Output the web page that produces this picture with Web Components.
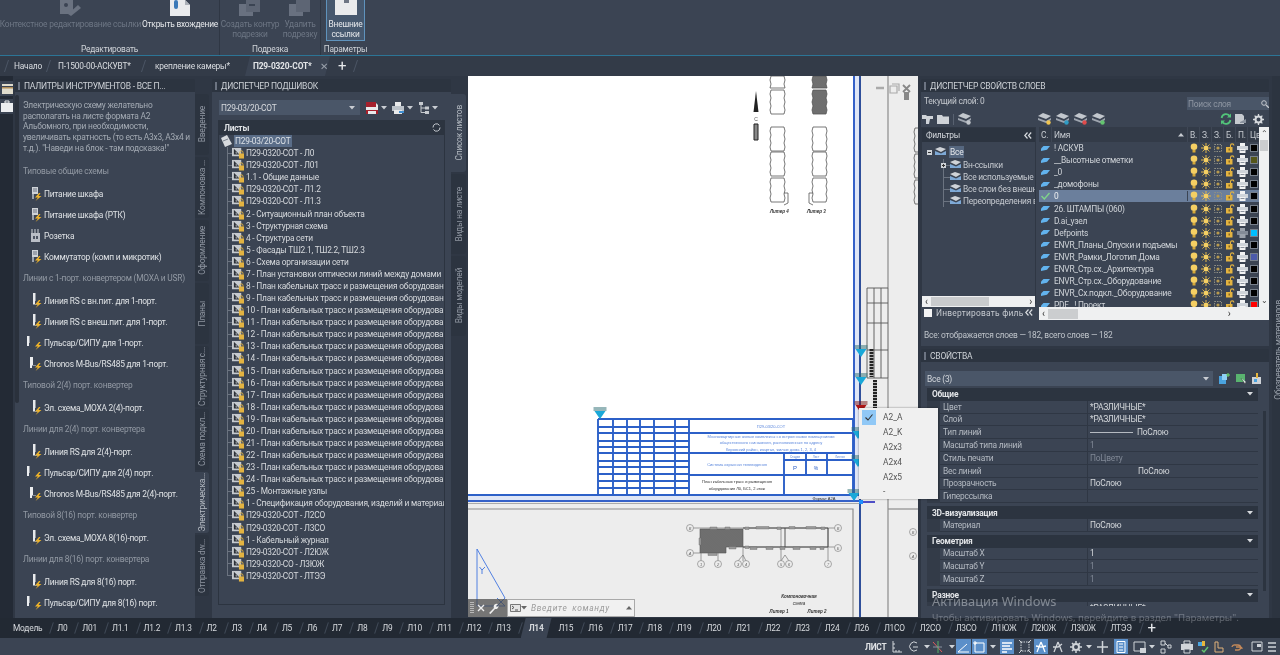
<!DOCTYPE html>
<html lang="ru">
<head>
<meta charset="utf-8">
<title>П29-0320-СОТ</title>
<style>
  html, body { margin: 0; height: 100%; background: #2f3744; }
  body {
    width: 1280px; height: 655px; overflow: hidden;
    display: flex; flex-direction: column;
    background: #2f3744; color: #d3d7dc;
    font: 8.400px Roboto, "Noto Sans", sans-serif;
    letter-spacing: -.22px;
    position: relative;
    filter: blur(.3px);
  }
</style>
</head>
<body>
<cad-ribbon></cad-ribbon>
<doc-tabs></doc-tabs>
<cad-main>
  <tool-strip></tool-strip>
  <dock-panel label="ПАЛИТРЫ ИНСТРУМЕНТОВ - ВСЕ П..." style="width:180px"><tool-palette></tool-palette></dock-panel>
  <side-tabs active="6" tabs="Введение|61,Компоновка ...|61,Оформление|61,Планы|61,Структурная с...|61,Схема подкл...|61,Электрическа...|61,Отправка dw...|61" style="width:14px;margin-right:3px"></side-tabs>
  <dock-panel label="ДИСПЕТЧЕР ПОДШИВОК" style="width:239px"><sheet-set></sheet-set></dock-panel>
  <side-tabs active="0" tabs="Список листов|78,Виды на листе|80,Виды моделей|80" style="width:15px;margin-right:2px"></side-tabs>
  <cad-canvas></cad-canvas>
  <right-dock>
    <dock-panel label="ДИСПЕТЧЕР СВОЙСТВ СЛОЕВ" style="height:270px"><layer-manager></layer-manager></dock-panel>
    <dock-panel label="СВОЙСТВА" style="flex:1"><props-panel></props-panel></dock-panel>
  </right-dock>
  <material-strip></material-strip>
</cad-main>
<layout-tabs></layout-tabs>
<status-bar></status-bar>
<layer-popup></layer-popup>
<win-activation></win-activation>

<script>
// small icons shared by the panels
const slash = (h = 12, c = '#4c5665') => `<svg width="5" height="${h}" viewBox="0 0 5 12"><path d="M4.5 0 .5 12" stroke="${c}" fill="none"/></svg>`;

const sheetIcon = `<svg width="12" height="12" viewBox="0 0 13 13"><path d="M0 1h10v9H0z" fill="#c6cacf"/><path d="M2 2v6h6z" fill="#2b2f36"/><path d="M4 5v2h2z" fill="#c6cacf"/><path d="M8.5 7V5.800a1.700 1.700 0 0 1 3.400 0V7" fill="none" stroke="#e3b341"/><path d="M7.500 7h5.500v5.500H7.500z" fill="#e3b341"/></svg>`;

const boltIcon = kind => {
  const blocks = {
    a: '<path d="M8 1h6v7H8z" fill="#cfd3d8"/><path d="M9 3h4M9 5h4" stroke="#6b7380"/><path d="M8 8h2v5H8z" fill="#9aa2ad"/>',
    b: '<path d="M9 0h2.500v8H11v3H9z" fill="#e8eaec"/><path d="M9 11h5v1H9z" fill="#8b93a0"/>',
    c: '<path d="M3 1h2.500v7H5v3H3z" fill="#eceef0"/>',
    d: '<path d="M6 1h3v8H8v3H6z" fill="#eceef0"/><path d="M8 9h4v1H8z" fill="#8b93a0"/>'
  };
  return `<svg width="19" height="16" viewBox="0 0 19 16">${blocks[kind]}<path d="M15 7 11 11.500h3L11.500 15l6-5h-3l2-3z" fill="#f0b429"/></svg>`;
};
const plugIcon = `<svg width="19" height="16" viewBox="0 0 19 16"><path d="M8 1v4M11 1v4M14 1v4" stroke="#cfd3d8"/><path d="M7 5h9v9H7z" fill="#b9bec6"/><path d="M9 8h2v3H9zM12 8h2v3h-2z" fill="#4c5462"/></svg>`;

const layerIcons = {
  bulb: `<svg width="10" height="10" viewBox="0 0 10 10"><circle cx="5" cy="3.800" r="3.300" fill="#f5cf63"/><path d="M3.500 7h3v2.500h-3z" fill="#d6a93a"/></svg>`,
  sun: `<svg width="10" height="10" viewBox="0 0 10 10"><circle cx="5" cy="5" r="2.500" fill="#f5cf63"/><path d="M5 0v2M5 8v2M0 5h2M8 5h2M1.500 1.500l1.400 1.400M7.100 7.100l1.400 1.400M1.500 8.500l1.400-1.400M7.100 2.900l1.400-1.400" stroke="#e5b84a"/></svg>`,
  vp: `<svg width="10" height="10" viewBox="0 0 10 10"><path d="M1.500 1.500h7v7h-7z" fill="none" stroke="#8f8f84" stroke-dasharray="1.500 1"/><circle cx="5" cy="5" r="1.600" fill="#b89a4e"/></svg>`,
  lock: `<svg width="10" height="10" viewBox="0 0 10 10"><path d="M5.500 4V2.600a1.700 1.700 0 0 1 3.400 0" fill="none" stroke="#e3b341" stroke-width="1.100"/><path d="M1 4h6.500v5.500H1z" fill="#e3b341"/><path d="M3.500 5.500h1.500v2H3.500z" fill="#8a6a1f"/></svg>`,
  print: `<svg width="11" height="10" viewBox="0 0 11 10"><path d="M3 0h5v3H3z" fill="#f2f3f4"/><path d="M0 3h11v4H0z" fill="#cfd4da"/><path d="M2.500 6h6v4h-6z" fill="#f2f3f4"/><path d="M3.500 7.500h4" stroke="#8a919c"/></svg>`,
  printOff: `<svg width="11" height="10" viewBox="0 0 11 10"><path d="M3 0h5v3H3z" fill="#9aa1ab"/><path d="M0 3h11v4H0z" fill="#828a96"/><path d="M2.500 6h6v4h-6z" fill="#9aa1ab"/></svg>`
};
const layerSwatch = `<svg width="9" height="7" viewBox="0 0 9 7"><path d="M0 3.500 2.500 1H9L6 4.800 0 6z" fill="#62b3ee"/></svg>`;
const arrowDown = (c = '#c8ccd2') => `<svg width="6" height="4" viewBox="0 0 6 4"><path d="M0 0h6L3 3.500z" fill="${c}"/></svg>`;
const chevrons = `<svg width="8" height="7" viewBox="0 0 8 7"><path d="M3.500.5.800 3.500l2.700 3M7.200.5 4.500 3.500l2.700 3" fill="none" stroke="#d7dade" stroke-width="1.200"/></svg>`;

class CadElement extends HTMLElement {
  connectedCallback() {
    if (this.shadowRoot) return;
    this.attachShadow({ mode: 'open' });
    this.shadowRoot.innerHTML = this.render();
  }
}

class CadRibbon extends CadElement {
  render() {
    return `<style>
      :host { display: flex; height: 56px; flex: none; background: #3b4453; border-bottom: 1px solid #2c7596; box-sizing: border-box; }
      .group { display: flex; flex-direction: column; height: 55px; border-right: 1px solid #2f3744; box-sizing: border-box; }
      .btns { display: flex; height: 44px; }
      .btn { display: flex; flex-direction: column; align-items: center; text-align: center; line-height: 10px; white-space: nowrap; }
      .btn svg { height: 19px; flex: none; display: block; }
      .off { color: #6d7684; }
      .on { color: #e6e8eb; }
      .sel { background: #46586e; border: 1px solid #5f93bd; border-top: 0; height: 41px; box-sizing: border-box; margin-left: 5px; width: 39px; }
      .cap { text-align: center; line-height: 11px; color: #d0d4d9; }
    </style>
    <div class="group" style="width:220px">
      <div class="btns">
        <div class="btn off" style="width:141px"><svg width="22" viewBox="0 0 22 19"><path d="M0 0h13v14H0z" fill="#6a7280"/><circle cx="6" cy="5" r="2" fill="#3b4453"/><path d="M8 14 18 5l3 3-10 8z" fill="#6a7280"/></svg>Контекстное редактирование ссылки</div>
        <div class="btn on" style="width:79px"><svg width="24" viewBox="0 0 24 19"><path d="M2 0h15l5 5v11H2z" fill="#e9ebed"/><path d="M17 0v5h5" fill="#aab0b8"/><rect x="6" y="0" width="4" height="9" rx="2" fill="#3a79b8"/></svg>Открыть вхождение</div>
      </div>
      <div class="cap">Редактировать</div>
    </div>
    <div class="group" style="width:101px">
      <div class="btns">
        <div class="btn off" style="width:60px"><svg width="22" viewBox="0 0 22 19"><path d="M0 4h14v12H0z" fill="#697180"/><path d="M7 0h14v12H7z" fill="#5d6574"/><path d="M10 4h6v2h-6z" fill="#3b4453"/></svg>Создать контур<br>подрезки</div>
        <div class="btn off" style="width:40px"><svg width="22" viewBox="0 0 22 19"><path d="M0 4h14v12H0z" fill="#697180"/><path d="M7 0h14v12H7z" fill="#5d6574"/></svg>Удалить<br>подрезку</div>
      </div>
      <div class="cap">Подрезка</div>
    </div>
    <div class="group" style="width:49px;border-right:0">
      <div class="btns">
        <div class="btn on sel"><svg width="22" viewBox="0 0 22 19"><path d="M0 0h22v15H0z" fill="#e9ebed"/><path d="M9 0h5v3H9z" fill="#6d7684"/></svg>Внешние<br>ссылки</div>
      </div>
      <div class="cap">Параметры</div>
    </div>`;
  }
}

class DocTabs extends CadElement {
  render() {
    return `<style>
      :host { display: flex; align-items: center; height: 20px; flex: none; background: #333b48; color: #d9dce0; }
      .tab { display: flex; align-items: center; white-space: nowrap; }
      .active { background: #3b4453; height: 20px; width: 85px; margin: 0 0 0 14px; padding-left: 8px; box-sizing: border-box; font-weight: 700; color: #e3e5e8; clip-path: polygon(5px 0, 100% 0, calc(100% - 5px) 100%, 0 100%); }
      .x { margin-left: 9px; color: #9aa1ab; font-weight: 400; font-size: 10px; }
      .plus { margin-left: 8px; font-size: 15px; line-height: 12px; color: #e6e8eb; }
      .s { display: flex; margin: 0 6px; }
    </style>
    <span class="s" style="margin-left:4px;margin-right:5px">${slash()}</span>
    <span class="tab" style="width:28px">Начало</span>
    <span class="s" style="margin:0 5px 0 4px">${slash()}</span><span class="tab" style="width:74px;margin-left:2px">П-1500-00-АСКУВТ*</span>
    <span class="s" style="margin:0 9px 0 9px">${slash()}</span><span class="tab" style="width:76px">крепление камеры*</span>
    <span class="tab active">П29-0320-СОТ*<span class="x">✕</span></span>
    <span class="plus">+</span>
    <span class="s" style="margin-left:7px">${slash()}</span>`;
  }
}

class CadMain extends CadElement {
  render() {
    return `<style>:host { display: flex; height: 542px; flex: none; background: #2f3744; overflow: hidden; }</style><slot></slot>`;
  }
}

class ToolStrip extends CadElement {
  render() {
    return `<style>
      :host { display: block; width: 13px; margin-right: 2px; background: #232a35; flex: none; padding-top: 5px; box-sizing: border-box; }
      div { background: #3b4453; height: 15px; margin-bottom: 3px; overflow: hidden; }
    </style>
    <div><svg width="13" height="15" viewBox="0 0 13 15"><path d="M2 3h11v2H2zM2 6h11v7H2z" fill="#e0dccd"/><path d="M2 6h11v1.500H2z" fill="#b08d57"/></svg></div>
    <div><svg width="13" height="15" viewBox="0 0 13 15"><path d="M1 4h12v9H1z" fill="#eceef0"/><path d="M5 2h4v2H5z" fill="none" stroke="#eceef0"/></svg></div>`;
  }
}

class DockPanel extends CadElement {
  render() {
    return `<style>
      :host { display: flex; flex-direction: column; flex: none; min-height: 0; }
      .bar { display: flex; align-items: center; gap: 4px; height: 13px; margin-top: 3px; padding-left: 3px; background: #2c3440; flex: none; white-space: nowrap; font-size: 8.500px; color: #ced2d7; border-radius: 2px 2px 0 0; }
      .bar i { width: 2px; height: 8px; background: #6c7482; display: block; flex: none; }
      .body { flex: 1; background: #3b4453; min-height: 0; display: flex; flex-direction: column; overflow: hidden; }
    </style>
    <div class="bar"><i></i>${this.getAttribute('label')}</div>
    <div class="body"><slot></slot></div>`;
  }
}

class SideTabs extends CadElement {
  render() {
    const active = +this.getAttribute('active');
    const tabs = this.getAttribute('tabs').split(',').map((t, i) => {
      const [label, h] = t.split('|');
      return `<div class="tab ${i === active ? 'on' : ''}" style="height:${h}px"><span>${label}</span></div>`;
    }).join('');
    return `<style>
      :host { display: flex; flex-direction: column; gap: 2px; flex: none; padding-top: 18px; box-sizing: border-box; }
      .tab { background: #2c3440; color: #8f96a1; display: flex; align-items: center; justify-content: center; border-radius: 0 3px 3px 0; overflow: hidden; white-space: nowrap; }
      .tab.on { background: #3b4453; color: #b4bac2; }
      span { writing-mode: vertical-rl; transform: rotate(180deg); }
    </style>${tabs}`;
  }
}

class ToolPalette extends CadElement {
  render() {
    const rows = [
      ['h', 'Типовые общие схемы'],
      ['i', 'Питание шкафа', 'a'], ['i', 'Питание шкафа (РТК)', 'a'], ['p', 'Розетка'], ['i', 'Коммутатор (комп и микротик)', 'a'],
      ['h', 'Линии с 1-порт. конвертером (MOXA и USR)'],
      ['i', 'Линия RS с вн.пит. для 1-порт.', 'b'], ['i', 'Линия RS с внеш.пит. для 1-порт.', 'b'], ['i', 'Пульсар/СИПУ для 1-порт.', 'c'], ['i', 'Chronos M-Bus/RS485 для 1-порт.', 'd'],
      ['h', 'Типовой 2(4) порт. конвертер'],
      ['i', 'Эл. схема_МОХА 2(4)-порт.', 'b'],
      ['h', 'Линии для 2(4) порт. конвертера'],
      ['i', 'Линия RS для 2(4)-порт.', 'b'], ['i', 'Пульсар/СИПУ для 2(4) порт.', 'c'], ['i', 'Chronos M-Bus/RS485 для 2(4)-порт.', 'd'],
      ['h', 'Типовой 8(16) порт. конвертер'],
      ['i', 'Эл. схема_МОХА 8(16)-порт.', 'b'],
      ['h', 'Линии для 8(16) порт. конвертера'],
      ['i', 'Линия RS для 8(16) порт.', 'b'], ['i', 'Пульсар/СИПУ для 8(16) порт.', 'c']
    ];
    const html = rows.map(r => {
      if (r[0] === 'h') return `<div class="row head">${r[1]}</div>`;
      const icon = r[0] === 'p' ? plugIcon : boltIcon(r[2]);
      return `<div class="row item">${icon}<span>${r[1]}</span></div>`;
    }).join('');
    return `<style>
      :host { display: flex; height: 100%; }
      .scroll { width: 4px; height: 308px; margin-top: 3px; background: #2a313c; flex: none; border-radius: 2px; }
      .list { padding: 8px 0 0 4px; flex: 1; white-space: nowrap; }
      p { margin: 0 0 7px; line-height: 10.700px; color: #a4abb4; }
      .row { height: 21px; display: flex; align-items: center; }
      .head { color: #9299a3; }
      .item { padding-left: 1px; color: #dfe2e5; gap: 1px; }
      .head + .item { margin-top: 2px; }
    </style>
    <div class="scroll"></div>
    <div class="list">
      <p>Электрическую схему желательно<br>располагать на листе формата А2<br>Альбомного, при необходимости,<br>увеличивать кратность (то есть А3х3, А3х4 и<br>т.д.). "Наведи на блок - там подсказка!"</p>
      ${html}
    </div>`;
  }
}

class SheetSet extends CadElement {
  render() {
    const plan = 'План кабельных трасс и размещения оборудования';
    const sheets = [
      'П29-0320-СОТ - Л0', 'П29-0320-СОТ - Л01', '1.1 - Общие данные', 'П29-0320-СОТ - Л1.2', 'П29-0320-СОТ - Л1.3',
      '2 - Ситуационный план объекта', '3 - Структурная схема', '4 - Структура сети', '5 - Фасады ТШ2.1, ТШ2.2, ТШ2.3',
      '6 - Схема организации сети', '7 - План установки оптически линий между домами'
    ];
    for (let n = 8; n <= 24; n++) sheets.push(`${n} - ${plan}`);
    sheets.push('25 - Монтажные узлы', '1 - Спецификация оборудования, изделий и материалов', 'П29-0320-СОТ - Л2СО', 'П29-0320-СОТ - Л3СО', '1 - Кабельный журнал', 'П29-0320-СОТ - Л2ЮЖ', 'П29-0320-СО - Л3ЮЖ', 'П29-0320-СОТ - ЛТЭЭ');
    const rows = sheets.map((s, i) => `<div class="row ${i === sheets.length - 1 ? 'last' : ''}">${sheetIcon}<span>${s}</span></div>`).join('');
    return `<style>
      :host { display: block; padding: 8px 6px 0; height: 100%; box-sizing: border-box; }
      .top { display: flex; align-items: center; height: 15px; margin-left: 1px; }
      .combo { width: 145px; height: 15px; background: #4a5668; box-sizing: border-box; padding: 0 5px 0 2px; display: flex; align-items: center; justify-content: space-between; color: #d7dade; margin-right: 6px; }
      .tool { display: flex; align-items: center; gap: 3px; width: 27px; }
      .head { margin-top: 5px; height: 15px; background: #2c3440; display: flex; align-items: center; justify-content: space-between; padding: 0 4px 0 6px; font-weight: 700; color: #dfe2e5; }
      .tree { height: 470px; border: 1px solid #2c3440; border-top: 0; overflow: hidden; white-space: nowrap; box-sizing: border-box; }
      .root { height: 12.080px; display: flex; align-items: center; padding-left: 2px; }
      .root b { font-weight: 400; background: #5a6d88; margin-left: 2px; padding: 0 1px; color: #dbe0e6; line-height: 12px; }
      .row { height: 12.080px; display: flex; align-items: center; padding-left: 13px; gap: 2px; color: #d6d9dd;
        background: linear-gradient(#6b7380, #6b7380) 8px 0 / 1px 100% no-repeat, linear-gradient(#6b7380, #6b7380) 8px 50% / 6px 1px no-repeat; }
      .row.last { background: linear-gradient(#6b7380, #6b7380) 8px 0 / 1px 50% no-repeat, linear-gradient(#6b7380, #6b7380) 8px 50% / 6px 1px no-repeat; }
      .row svg { flex: none; }
    </style>
    <div class="top">
      <div class="combo">П29-03/20-СОТ ${arrowDown()}</div>
      <div class="tool"><svg width="12" height="12" viewBox="0 0 12 12"><path d="M0 0h9l3 3v9H0z" fill="#e8e9ea"/><path d="M0 0h10v5H0zM0 8h12v4H0z" fill="#a4202c"/><path d="M2 9h8v3H2z" fill="#e8e9ea"/></svg>${arrowDown()}</div>
      <div class="tool"><svg width="12" height="12" viewBox="0 0 12 12"><path d="M3 0h6v4H3z" fill="#e8e9ea"/><path d="M0 4h12v5H0z" fill="#bcc2c9"/><path d="M2 8h8v4H2z" fill="#e8e9ea"/><path d="M7 9h5v2H7z" fill="#3f8fd2"/></svg>${arrowDown()}</div>
      <div class="tool"><svg width="10" height="12" viewBox="0 0 10 12"><path d="M0 0h4v3H0zM6 4.500h4v3H6zM6 9h4v3H6z" fill="#c6cacf"/><path d="M2 3v7.500h4M2 6h4" stroke="#c6cacf" fill="none"/></svg>${arrowDown()}</div>
    </div>
    <div class="head">Листы <svg width="9" height="9" viewBox="0 0 9 9"><path d="M7.500 2.500A3.500 3.500 0 0 0 1 4.500M1.500 6.500A3.500 3.500 0 0 0 8 4.500" fill="none" stroke="#c8ccd2"/></svg></div>
    <div class="tree">
      <div class="root"><svg width="11" height="12" viewBox="0 0 11 12"><path d="M0 3 6 0l5 9-7 3z" fill="#d7dade"/><path d="M2 6l5-2" stroke="#7b838f"/></svg><b>П29-03/20-СОТ</b></div>
      ${rows}
    </div>`;
  }
}

class CadCanvas extends CadElement {
  render() {
    // wobbly outline of a building section, as it reads at this zoom
    const chain = (x, y, w, h) => {
      const left = [], right = [];
      for (let t = 0; t <= h; t += 4) {
        const o = t % 8 ? 1 : 0;
        right.push(`L${x + w + o} ${y + t}`);
        left.unshift(`L${x - o} ${y + t}`);
      }
      return `M${x} ${y}` + right.join('') + left.join('') + 'Z';
    };
    const tri = (x, y, c = '#19a8d8') => `<path d="M${x - 6.500} ${y}h13M${x - 6.500} ${y + 2}h13" stroke="${c === '#19a8d8' ? '#2f6f74' : '#7a1515'}" stroke-width="1"/><path d="M${x - 5.500} ${y + 3}h11L${x} ${y + 11}z" fill="${c}"/>`;
    const bub = (x, y, t) => `<circle cx="${x}" cy="${y}" r="3.500" fill="#ededed" stroke="#888" stroke-width=".7"/><text x="${x}" y="${y + 1.500}" font-size="4" text-anchor="middle" fill="#666" font-style="italic">${t}</text>`;
    const hl = [419, 427, 433, 441, 447, 453, 461, 467, 474, 481, 488];
    const vl = [598, 613, 627, 640, 654, 675, 689];
    return `<style>
      :host { display: block; width: 450px; height: 541px; flex: none; margin-right: 2px; position: relative; overflow: hidden; letter-spacing: 0; }
      svg.d { display: block; font-family: "Liberation Sans", sans-serif; }
      .cmd { position: absolute; left: 0; bottom: 0; width: 167px; height: 18px; display: flex; }
      .grip { width: 39px; background: rgba(70, 70, 70, .72); display: flex; align-items: center; gap: 3px; padding-left: 2px; box-sizing: border-box; }
      .grip i { width: 4px; height: 12px; display: block; background: repeating-linear-gradient(#b8b8b8 0 1px, transparent 1px 2px); }
      .input { flex: 1; background: #f1f1f1; border: 1px solid #a9a9a9; box-sizing: border-box; display: flex; align-items: center; padding-left: 2px; color: #9b9b9b; font-style: italic; letter-spacing: .7px; white-space: nowrap; word-spacing: 2px; }
      .input span { flex: 1; margin-left: 4px; }
    </style>
    <svg class="d" width="450" height="541" viewBox="468 76 450 541">
      <defs><pattern id="h" width="1.600" height="1.600" patternUnits="userSpaceOnUse" patternTransform="rotate(45)"><path d="M0 0h1.600v1.600H0z" fill="#8a8a8a"/><path d="M0 .8h1.600" stroke="#4b4b4b" stroke-width=".7"/></pattern></defs>
      <rect x="468" y="76" width="450" height="541" fill="#ededed"/>
      <rect x="468" y="76" width="385" height="419" fill="#fff"/>
      <path d="M857 76V500" stroke="#dfe6f6" stroke-width="4"/>
      <path d="M854 76V500" stroke="#3561c8" stroke-width="2"/>
      <path d="M860 76V617" stroke="#2f4f9a" stroke-width="2"/>
      <path d="M888 76V288M888 378V617" stroke="#8c8c8c" stroke-width="1.200"/>
      <path d="M468 498h385" stroke="#dfe6f6" stroke-width="6"/>
      <path d="M468 495H860" stroke="#2c60c8" stroke-width="2"/>
      <path d="M468 501h392" stroke="#3561c8" stroke-width="1.800"/>
      <path d="M468 503.500h392" stroke="#8c8c8c" stroke-width=".7"/>
      <path d="M468 509h385v108" fill="none" stroke="#8c8c8c" stroke-width="1.200"/>
      <path d="M918 509h-30" fill="none" stroke="#8c8c8c" stroke-width="1.200"/>

      <g fill="none" stroke="#555" stroke-width=".8">
        <path d="${chain(771, 76, 13, 14)}"/><path d="${chain(771, 90, 13, 27)}"/>
        <path d="${chain(771, 127, 13, 25)}"/><path d="${chain(771, 152, 13, 25)}"/><path d="${chain(771, 178, 13, 27)}"/><path d="M784 193h4v10l-4 2"/>
        <path d="${chain(813, 127, 13, 25)}"/><path d="${chain(813, 152, 13, 25)}"/><path d="${chain(813, 178, 13, 27)}"/><path d="M813 193h-4v10l4 2"/>
        <path d="${chain(915, 128, 6, 25)}"/><path d="${chain(915, 154, 6, 25)}"/><path d="${chain(915, 180, 6, 25)}"/>
      </g>
      <path d="${chain(813, 76, 13, 14)}" fill="url(#h)" stroke="#555" stroke-width=".8"/>
      <path d="${chain(813, 90, 13, 27)}" fill="url(#h)" stroke="#555" stroke-width=".8"/>
      <path d="M756 91 758.500 112 753.500 112z" fill="#222"/><text x="756" y="121" font-size="5" text-anchor="middle" fill="#555">С</text>
      <path d="M754 124h4v16h-4z" fill="#888" stroke="#222" stroke-width="1"/>
      <g font-size="4.500" font-style="italic" fill="#333" font-weight="700"><text x="770" y="213">Литер 4</text><text x="807" y="213">Литер 3</text></g>

      <path d="M876 88h8" stroke="#aaa" stroke-width="2.500"/><path d="M890 86h7v7h-7zM892 84h7v7" fill="none" stroke="#aaa" stroke-width="1.200"/><path d="M903 85l7 7M910 85l-7 7" stroke="#888" stroke-width="1.800"/><path d="M904 92h5v8h-5z" fill="#888"/>
      <g fill="none" stroke="#555" stroke-width=".9"><path d="M867 288h21v90h-21zM867 303h21M867 323h21M867 350h21M874 288v90M881 288v90"/></g>
      <path d="M871.500 349V377M875 380V408" stroke="#222" stroke-width="4" stroke-dasharray="2.200 .8" fill="none"/>

      <g fill="none" stroke="#2c60c8" stroke-width="1.900">
        <path d="M598 419H853"/>
        ${hl.map(y => `<path d="M598 ${y}H689"/>`).join('')}
        ${vl.map(x => `<path d="M${x} 419V495"/>`).join('')}
        <path d="M689 433H853M689 453H853M689 475H853M784 453V495M784 460H853M806 453V475M827 453V475M853 419V495"/>
      </g>
      <g font-size="4" fill="#5a86dc" text-anchor="middle">
        <text x="771" y="428">П29-03/20-СОТ</text>
        <text x="771" y="438">Многоквартирные жилые комплексы со встроенными помещениями</text>
        <text x="771" y="444">общественного назначения, расположенные по адресу</text>
        <text x="771" y="451">Кировский район, квартал, жилые дома 1, 2, 3, 4</text>
        <text x="737" y="466">Система охранная телевидения</text>
        <text x="795" y="458" font-size="3">Стадия</text><text x="816" y="458" font-size="3">Лист</text><text x="840" y="458" font-size="3">Листов</text>
      </g>
      <g text-anchor="middle" fill="#2a2a2a"><text x="737" y="483" font-size="4">План кабельных трасс и размещения</text><text x="737" y="490" font-size="4">оборудования Л0, БС1, 2 этаж</text><text x="795" y="470" font-size="6" fill="#2c60c8">Р</text><text x="816" y="470" font-size="5" fill="#2c60c8">%</text><text x="824" y="499.500" font-size="4">Формат  А2А</text></g>
      ${tri(600, 408)}${tri(861, 346)}${tri(861, 374)}${tri(861, 402, '#b01515')}${tri(858, 428)}${tri(858, 456)}${tri(854, 490)}
      <path d="M859 500h4v4h-4z" fill="#1f8fff"/><path d="M863 502h12" stroke="#1818b8" stroke-width="1.500"/>

      <path d="M477 549 505 598M477 549V606H505M482 570l-2.500-3M482 570l3-3M482 570v4M497 598l8 8M497 606l8-8" fill="none" stroke="#3f74e0" stroke-width=".9"/>

      <g stroke="#777" stroke-width=".7" fill="none"><path d="M693 528H835M693 553H700M701 553V561M718 553V561M743 547V561M781 528V561M828 528V561M743 547H835M738 561 743 555 746 561M781 561 785 555 789 561"/></g>
      <path d="M700 529h43v18h-17v6h-26z" fill="url(#h)" stroke="#555" stroke-width=".6"/>
      <path d="M743 528H828V547H743" fill="none" stroke="#444" stroke-width=".9"/><path d="M785 528V547" stroke="#444" stroke-width=".9"/>
      <g fill="#999" stroke="#666" stroke-width=".4"><path d="M710 527h7v2.500h-7zM725 527h5v2.500h-5zM745 527h4v2.500h-4zM756 526.500h13v2.500h-13zM777 527h4v2.500h-4zM789 526.500h6v2.500h-6zM806 526.500h10v2.500h-10zM821 527h4v2.500h-4zM745 546h4v2.500h-4zM750 547h7v2.500h-7zM766 547h7v2.500h-7zM780 547h5v2.500h-5zM793 547h7v2.500h-7zM810 547h6v2.500h-6zM820 547h4v2.500h-4zM699 538h2v7h-2zM708 553h9v2.500h-9zM729 546.500h7v2.500h-7z"/></g>
      ${bub(690, 528, 'В')}${bub(690, 553, 'А')}${bub(701, 564, '1')}${bub(718, 564, '2')}${bub(738, 564, '3')}${bub(746, 564, '4')}${bub(781, 564, '5')}${bub(789, 564, '6')}${bub(828, 564, '7')}${bub(838, 528, 'В')}${bub(838, 548, 'Б')}${bub(913, 532, 'В')}${bub(913, 556, 'А')}
      <g font-size="4.500" font-style="italic" fill="#333" text-anchor="middle" font-weight="700"><text x="799" y="598">Компоновочная</text><text x="799" y="605" font-weight="400">схема</text><text x="779" y="613">Литер 1</text><text x="817" y="613">Литер 2</text></g>
    </svg>
    <div class="cmd">
      <div class="grip"><i></i><svg width="8" height="8" viewBox="0 0 8 8"><path d="M1 1l6 6M7 1 1 7" stroke="#eee" stroke-width="1.400"/></svg><svg width="11" height="11" viewBox="0 0 11 11"><path d="M1 10 6 5a3 3 0 0 1 4-4L8 3l1 1 1.500-1.500A3 3 0 0 1 7 6L2.500 11z" fill="#eee"/></svg></div>
      <div class="input"><svg width="11" height="8" viewBox="0 0 11 8"><path d="M.5.500h10v7H.5z" fill="#e4e4e4" stroke="#777"/><path d="M2 2l2 1.500L2 5M5 6h3" stroke="#555" fill="none"/></svg>${arrowDown('#666')}<span>Введите команду</span>${arrowDown('#666').replace('M0 0h6L3 3.500z', 'M0 3.500h6L3 0z')}<b style="width:2px"></b></div>
    </div>`;
  }
}

class RightDock extends CadElement {
  render() {
    return `<style>:host { display: flex; flex-direction: column; width: 348px; margin: 0 1px 0 1px; flex: none; }</style><slot></slot>`;
  }
}

class LayerManager extends CadElement {
  render() {
    const names = ['! АСКУВ', '__Высотные отметки', '_0', '_домофоны', '0', '26. ШТАМПЫ (060)', 'D.ai_узел', 'Defpoints', 'ENVR_Планы_Опуски и подъемы', 'ENVR_Рамки_Логотип Дома', 'ENVR_Стр.сх._Архитектура', 'ENVR_Стр.сх._Оборудование', 'ENVR_Сх.подкл._Оборудование', 'PDF_ ! Проект'];
    const colors = { 1: '#55561a', 7: '#00bfff', 9: '#4b5aaa', 13: '#ff0000' };
    const rows = names.map((n, i) => `
      <div class="row ${i === 4 ? 'cur' : ''}">
        <span class="c">${i === 4 ? '<svg width="9" height="8" viewBox="0 0 9 8"><path d="M.5 4 3.300 7 8.500 1" fill="none" stroke="#7fd48a" stroke-width="1.400"/></svg>' : layerSwatch}</span>
        <span class="n">${n}</span>
        <span class="g">${layerIcons.bulb}</span><span class="g">${layerIcons.sun}</span><span class="g">${layerIcons.vp}</span><span class="g">${layerIcons.lock}</span><span class="g">${i === 7 ? layerIcons.printOff : layerIcons.print}</span>
        <span class="g"><i style="background:${colors[i] || '#000'}"></i></span>
      </div>`).join('');
    const folder = '<svg width="12" height="10" viewBox="0 0 12 10"><path d="M0 1h5l1 1.500h6V10H0z" fill="#cfd3d8"/></svg>';
    const sheet = (c) => `<svg width="14" height="12" viewBox="0 0 14 12"><path d="M0 3 5 0l8 3-5 3z" fill="#c2c7cd"/><path d="M0 5l8 3 5-3v2L8 10 0 7z" fill="#9ea5af"/><circle cx="10.500" cy="9.500" r="2.200" fill="${c}"/></svg>`;
    const scrollH = `<div class="hs"><span>‹</span><i></i><span>›</span></div>`;
    const treeRow = (t, cls, icon) => `<div class="t ${cls}">${icon}<span>${t}</span></div>`;
    const smallLayer = '<svg width="11" height="10" viewBox="0 0 11 10"><path d="M0 2 5 0l6 2-5 3z" fill="#cfd3d8"/><path d="M0 4l6 2.500L11 4v4H0z" fill="#7ea9d6"/></svg>';
    const plus = '<svg class="pm" width="5" height="5" viewBox="0 0 5 5"><path d="M0 0h5v5H0z" fill="#cfd3d8"/><path d="M1 2.500h3M2.500 1v3" stroke="#333"/></svg>';
    return `<style>
      :host { display: block; height: 100%; position: relative; }
      .cur-row { display: flex; justify-content: space-between; height: 19px; padding: 4px 0 0 3px; color: #c4c8ce; box-sizing: border-box; }
      .search { width: 82px; height: 13px; background: #4a5668; color: #8f97a3; padding-left: 1px; display: flex; align-items: center; justify-content: space-between; margin-top: 1px; box-sizing: border-box; }
      .tools { height: 16px; display: flex; align-items: center; padding-left: 1px; gap: 4px; }
      .tools .sp { width: 1px; height: 11px; background: #586170; }
      .split { display: flex; height: 193px; gap: 3px; }
      .filters { width: 115px; flex: none; display: flex; flex-direction: column; background: #3b4453; border: 1px solid #2f3744; box-sizing: border-box; }
      .fh { height: 14px; background: #2c3440; display: flex; align-items: center; justify-content: space-between; padding: 0 3px 0 4px; flex: none; }
      .ft { height: 151px; padding-top: 3px; flex: none; white-space: nowrap; overflow: hidden; color: #c6cad0; }
      .t { height: 12.100px; display: flex; align-items: center; gap: 2px; padding-left: 28px; position: relative; }
      .t svg { flex: none; }
      .t .pm { position: absolute; left: 19px; top: 3.500px; }
      .t.root { padding-left: 5px; margin: 1px 0; gap: 3px; }
      .t.root span { background: #56677f; padding: 0 1px; line-height: 12px; color: #e6e8eb; }
      .t.tr { background: linear-gradient(#6b7380, #6b7380) 21px 0 / 1px 100% no-repeat, linear-gradient(#6b7380, #6b7380) 21px 50% / 7px 1px no-repeat; }
      .hs { height: 11px; background: #eff0f1; display: flex; align-items: center; justify-content: space-between; color: #333; flex: none; font-size: 10px; line-height: 10px; padding: 0 3px; box-sizing: border-box; }
      .hs i { flex: 1; height: 9px; margin: 0 10px 0 3px; background: linear-gradient(90deg, #c9cbcd 66%, transparent 66%); }
      .inv { display: flex; align-items: center; justify-content: space-between; height: 17px; padding: 0 3px; color: #c6cad0; white-space: nowrap; overflow: hidden; letter-spacing: .25px; }
      .inv i { width: 8px; height: 8px; background: #f4f4f4; display: inline-block; vertical-align: -1px; margin-right: 4px; }
      .list { flex: 1; display: flex; flex-direction: column; height: 193px; min-width: 0; }
      .lwrap { display: flex; height: 180px; flex: none; }
      .table { width: 220px; overflow: hidden; flex: none; white-space: nowrap; }
      .th { display: flex; height: 15px; background: #2c3440; }
      .th span { background: #333b48; border-right: 1px solid #3f4755; display: flex; align-items: center; box-sizing: border-box; padding-left: 2px; color: #c6cad0; flex: none; overflow: hidden; }
      .row { display: flex; height: 12.100px; align-items: center; color: #d0d4d9; }
      .row.cur { background: #6b7f9c; color: #edeff1; }
      .c { width: 13px; flex: none; display: flex; justify-content: center; }
      .n { width: 136px; flex: none; padding-left: 2px; box-sizing: border-box; overflow: hidden; }
      .cur .n { border-right: 1px solid #3b4453; }
      .g { width: 12px; flex: none; display: flex; justify-content: center; align-items: center; }
      .g i { width: 8px; height: 8px; border: 1px solid #77808c; box-sizing: border-box; display: block; }
      .vs { width: 10px; flex: none; background: #f0f1f2; display: flex; flex-direction: column; align-items: center; justify-content: space-between; color: #444; font-size: 8px; padding: 2px 0; box-sizing: border-box; }
      .vs b { width: 8px; height: 11px; background: #cbcdcf; margin-top: 2px; display: block; }
      .vs .m { flex: 1; }
      .hsl { height: 13px; }
      .status { height: 25px; display: flex; align-items: center; padding: 5px 0 0 3px; color: #bfc4ca; box-sizing: border-box; }
    </style>
    <div class="cur-row">Текущий слой: 0 <div class="search">Поиск слоя <svg width="8" height="8" viewBox="0 0 8 8"><circle cx="3" cy="3" r="2.300" fill="none" stroke="#c4c8ce"/><path d="M5 5l3 3" stroke="#c4c8ce" stroke-width="1.300"/></svg></div></div>
    <div class="tools">
      <svg width="11" height="10" viewBox="0 0 11 10"><path d="M0 1h4l1 1h6v3H8l-1 5H4V5H0z" fill="#cfd3d8"/></svg>
      ${folder}<i class="sp"></i>${sheet('#bfc4ca')}
      <span style="width:58px"></span>
      ${sheet('#f0c550')}${sheet('#2f9bc4')}${sheet('#e04b4b')}${sheet('#63c46f')}
      <span style="flex:1"></span>
      <svg width="12" height="12" viewBox="0 0 12 12"><path d="M10 3.500A4.500 4.500 0 0 0 1.600 5M2 8.500A4.500 4.500 0 0 0 10.400 7" fill="none" stroke="#52c47a" stroke-width="1.800"/><path d="M11 .5v4H7zM1 11.500v-4h4z" fill="#52c47a"/></svg>
      <svg width="11" height="11" viewBox="0 0 11 11" style="margin-left:-1px"><path d="M0 0h7l2 2v8H0z" fill="#c6cacf"/><path d="M5 8 11 5v4H5z" fill="#8a929e"/></svg>
      <svg width="11" height="11" viewBox="0 0 11 11" style="margin:0 5px 0 3px"><circle cx="5.500" cy="5.500" r="3" fill="none" stroke="#d7dade" stroke-width="2"/><path d="M5.500 0v2M5.500 9v2M0 5.500h2M9 5.500h2M1.600 1.600 3 3M8 8l1.400 1.400M1.600 9.400 3 8M8 3l1.400-1.400" stroke="#d7dade" stroke-width="1.300"/></svg>
    </div>
    <div class="split">
      <div style="width:115px;flex:none">
        <div class="filters" style="height:177px">
          <div class="fh">Фильтры ${chevrons}</div>
          <div class="ft">
            ${treeRow('Все', 'root', '<svg width="5" height="5" viewBox="0 0 5 5"><path d="M0 0h5v5H0z" fill="#cfd3d8"/><path d="M1 2.500h3" stroke="#333"/></svg>' + smallLayer)}
            ${treeRow('Вн-ссылки', 'tr', plus + smallLayer)}
            ${treeRow('Все используемые слои', 'tr', smallLayer)}
            ${treeRow('Все слои без внешних ссылок', 'tr', smallLayer)}
            ${treeRow('Переопределения видового экрана', 'tr', smallLayer)}
          </div>
          ${scrollH}
        </div>
        <div class="inv"><span><i></i>Инвертировать филь</span>${chevrons}</div>
      </div>
      <div class="list">
        <div class="lwrap">
          <div class="table">
            <div class="th"><span style="width:13px">С.</span><span style="width:136px;justify-content:space-between;padding:0 3px 0 2px">Имя ${arrowDown('#c8ccd2').replace('M0 0h6L3 3.500z', 'M0 3.500h6L3 0z')}</span><span style="width:12px">В.</span><span style="width:12px">З.</span><span style="width:12px">З.</span><span style="width:12px">Б.</span><span style="width:12px">П.</span><span style="width:12px">Цв</span></div>
            ${rows}
          </div>
          <div class="vs"><span>⌃</span><b></b><span class="m"></span><span>⌄</span></div>
        </div>
        <div class="hs hsl"><span>‹</span><i style="margin-right:150px;background:#cbcdcf;height:10px;flex:0 0 30px"></i><span style="margin-left:auto;margin-right:46px">›</span></div>
      </div>
    </div>
    <div class="status">Все: отображается слоев — 182, всего слоев — 182</div>`;
  }
}

class PropSection extends CadElement {
  render() {
    return `<style>
      :host { display: block; margin-bottom: 3px; }
      .h { height: 12.800px; background: #2c3440; display: flex; align-items: center; justify-content: space-between; font-weight: 700; padding: 0 5px; color: #e2e4e7; }
      .rows { padding-left: 13px; background: #333b48; }
    </style><div class="h">${this.getAttribute('label')} ${arrowDown('#d6d9dd')}</div><div class="rows"><slot></slot></div>`;
  }
}

class PropRow extends CadElement {
  render() {
    return `<style>
      :host { display: grid; grid-template-columns: 148px 1fr; height: 12.800px; background: #3b4453; box-sizing: border-box; border-bottom: 1px solid #2f3744; align-items: center; color: #b4bac2; }
      .k { border-right: 1px solid #2f3744; height: 100%; display: flex; align-items: center; padding-left: 3px; box-sizing: border-box; }
      .v { padding-left: 2px; color: #d4d7db; white-space: nowrap; display: flex; align-items: center; }
      :host([dim]) .v { color: #7f8794; }
      :host([shift]) .v { padding-left: 50px; }
      i { width: 43px; height: 1px; background: #b5bac1; margin-right: 4px; display: block; }
    </style><div class="k">${this.getAttribute('k')}</div><div class="v">${this.hasAttribute('line') ? '<i></i>' : ''}<slot></slot></div>`;
  }
}

class PropsPanel extends CadElement {
  render() {
    return `<style>
      :host { display: block; height: 100%; position: relative; }
      .top { display: flex; align-items: center; padding: 9px 0 0 4px; height: 15px; }
      .combo { width: 288px; height: 15px; background: #4a5668; display: flex; justify-content: space-between; align-items: center; padding: 0 4px 0 2px; box-sizing: border-box; color: #d3d7dc; margin-right: 6px; }
      .top svg.t { margin-right: 5px; }
      .grid { width: 331px; margin: 2px 0 0 6px; height: 218px; overflow: hidden; }
      .bar { position: absolute; right: 3px; top: 49px; height: 180px; width: 3px; background: #2c3440; }
    </style>
    <div class="top">
      <div class="combo">Все (3) ${arrowDown()}</div>
      <svg class="t" width="11" height="11" viewBox="0 0 11 11"><path d="M0 3h7v8H0z" fill="#4aa3df"/><path d="M3 1h5v6H3z" fill="#8fd0f5"/><path d="M9 0v4M7 2h4" stroke="#6fdc6f"/></svg>
      <svg class="t" width="11" height="11" viewBox="0 0 11 11"><path d="M1 1h9v8H1z" fill="#59b36f"/><path d="M6 5l4 6 1-2" fill="#e9ebed" stroke="#333" stroke-width=".5"/></svg>
      <svg class="t" width="11" height="11" viewBox="0 0 11 11"><path d="M1 4h9v7H1z" fill="#cfd3d8"/><path d="M5 0h2v5H5z" fill="#e8b63c"/><path d="M3 6h3v3H3z" fill="#4aa3df"/></svg>
    </div>
    <div class="grid">
      <prop-section label="Общие">
        <prop-row k="Цвет">*РАЗЛИЧНЫЕ*</prop-row>
        <prop-row k="Слой">*РАЗЛИЧНЫЕ*</prop-row>
        <prop-row k="Тип линий" line>ПоСлою</prop-row>
        <prop-row k="Масштаб типа линий" dim>1</prop-row>
        <prop-row k="Стиль печати" dim>ПоЦвету</prop-row>
        <prop-row k="Вес линий" shift>ПоСлою</prop-row>
        <prop-row k="Прозрачность">ПоСлою</prop-row>
        <prop-row k="Гиперссылка"></prop-row>
      </prop-section>
      <prop-section label="3D-визуализация"><prop-row k="Материал">ПоСлою</prop-row></prop-section>
      <prop-section label="Геометрия">
        <prop-row k="Масштаб X">1</prop-row>
        <prop-row k="Масштаб Y" dim>1</prop-row>
        <prop-row k="Масштаб Z" dim>1</prop-row>
      </prop-section>
      <prop-section label="Разное"><prop-row k="">*РАЗЛИЧНЫЕ*</prop-row></prop-section>
    </div>
    <div class="bar"></div>`;
  }
}

class MaterialStrip extends CadElement {
  render() {
    return `<style>
      :host { display: flex; align-items: flex-start; justify-content: center; width: 8px; margin-left: 2px; flex: none; background: #2c3440; padding-top: 224px; box-sizing: border-box; overflow: hidden; white-space: nowrap; color: #9ca3ad; }
      span { writing-mode: vertical-rl; transform: rotate(180deg); margin-left: 3px; }
    </style><span>Обозреватель материалов</span>`;
  }
}

class LayoutTabs extends CadElement {
  render() {
    const names = ['Модель', 'Л0', 'Л01', 'Л1.1', 'Л1.2', 'Л1.3', 'Л2', 'Л3', 'Л4', 'Л5', 'Л6', 'Л7', 'Л8', 'Л9', 'Л10', 'Л11', 'Л12', 'Л13', 'Л14', 'Л15', 'Л16', 'Л17', 'Л18', 'Л19', 'Л20', 'Л21', 'Л22', 'Л23', 'Л24', 'Л26', 'Л1СО', 'Л2СО', 'Л3СО', 'Л1ЮЖ', 'Л2ЮЖ', 'Л3ЮЖ', 'ЛТЭЭ'];
    const html = names.map(n => `<span class="tab ${n === 'Л14' ? 'on' : ''}">${n}</span>`).join('');
    return `<style>
      :host { display: flex; align-items: center; height: 20px; flex: none; background: #222933; color: #d6d9dd; padding-left: 13px; white-space: nowrap; box-sizing: border-box; }
      .tab { display: flex; align-items: center; height: 20px; margin-right: 14.900px; position: relative; }
      .tab::after { content: ""; position: absolute; right: -10px; top: 4px; height: 12px; width: 1px; background: #414a58; transform: rotate(18deg); }
      .on { background: #3b4453; margin: 0 7px 0 -5px; padding: 0 8px; font-weight: 700; clip-path: polygon(5px 0, 100% 0, calc(100% - 5px) 100%, 0 100%); }
      .on::after { display: none; }
      .plus { font-size: 15px; line-height: 12px; color: #e6e8eb; margin-left: 1px; }
    </style>${html}<span class="plus">+</span>`;
  }
}

class StatusBar extends CadElement {
  render() {
    const w = '#d0d4d9';
    const arrow = m => `<span style="margin-left:${m}px;display:flex">${arrowDown(w)}</span>`;
    const ic = (m, width, body, on) => `<span class="i ${on ? 'on' : ''}" style="margin-left:${m}px;width:${width}px"><svg width="${width}" height="14" viewBox="0 0 ${width} 14">${body}</svg></span>`;
    return `<style>
      :host { display: flex; align-items: center; height: 17px; flex: none; background: #3b4453; padding-left: 865px; box-sizing: border-box; overflow: hidden; }
      .t { font-weight: 700; color: #e2e4e7; width: 22px; flex: none; }
      .i { display: flex; flex: none; height: 15px; align-items: center; justify-content: center; }
      .on { background: #5b8fc9; }
    </style>
    <span class="t">ЛИСТ</span>
    ${ic(5, 10, `<path d="M1 1v11h9" fill="none" stroke="${w}"/><path d="M1 4h2M1 8h2M4 12v-2M7 12v-2" stroke="${w}"/>`)}
    ${ic(6, 10, `<path d="M9 3A4.500 4.500 0 1 0 9 10" fill="none" stroke="${w}"/><path d="M5 7h5" stroke="${w}"/>`)}
    ${arrow(6)}
    ${ic(2, 11, `<path d="M1 2l9 10" stroke="#e05b5b"/><path d="M6 1v12" stroke="#58b368"/><path d="M1 7h9" stroke="#8a92a0"/>`)}
    ${arrow(6)}
    ${ic(1, 15, `<path d="M2 12 11 4M2 12h11" fill="none" stroke="#fff"/>`, 1)}
    ${ic(1, 15, `<path d="M3 3h9v9H3z" fill="none" stroke="#fff"/><path d="M1 3h4M3 1v4" stroke="#fff"/>`, 1)}
    ${arrow(3)}
    ${ic(4, 14, `<path d="M2 3h10M2 6h8M2 9h10M2 12h5" stroke="#fff" stroke-width="1.500"/>`, 1)}
    ${ic(5, 12, `<path d="M2 2h8v9H2z" fill="none" stroke="${w}" stroke-dasharray="1.500 1"/><path d="M0 0l3 3M12 0 9 3M0 13l3-3M12 13l-3-3" stroke="${w}"/>`)}
    ${ic(3, 14, `<path d="M7 2 3 12M7 2l4 10M2 6l5 1 5-1" fill="none" stroke="#fff" stroke-width="1.300"/>`, 1)}
    ${ic(4, 11, `<path d="M6 2 2 12M6 2l4 10M1 7l5 0 4-3" fill="none" stroke="${w}" stroke-width="1.300"/>`)}
    ${ic(7, 12, `<circle cx="6" cy="7" r="3" fill="none" stroke="${w}" stroke-width="2"/><path d="M6 1v2M6 11v2M0 7h2M10 7h2M2 3l1.500 1.500M8.500 9.500 10 11M2 11l1.500-1.500M8.500 4.500 10 3" stroke="${w}" stroke-width="1.500"/>`)}
    ${arrow(4)}
    ${ic(5, 11, `<path d="M5.500 1v12M0 7h11" stroke="${w}" stroke-width="1.500"/>`)}
    ${ic(6, 14, `<path d="M3 1.500h8v11H3z" fill="none" stroke="#fff"/><path d="M5 4h4M5 7h4M5 10h4" stroke="#fff"/>`, 1)}
    ${ic(5, 14, `<path d="M1 2h11v9H1z" fill="none" stroke="${w}"/><path d="M7 8h6v5H7z" fill="${w}"/>`)}
    ${arrow(2)}
    ${ic(5, 12, `<path d="M1 1h4v4H1zM8 5h3v3H8zM1 9h4v4H1zM5 3l3 3" fill="none" stroke="${w}"/>`)}
    ${ic(9, 12, `<path d="M3 1h6v3H3z" fill="none" stroke="${w}"/><path d="M0 4h12v6H0z" fill="${w}"/><path d="M3 9h6v4H3z" fill="#3b4453" stroke="${w}"/>`)}
    ${ic(4, 12, `<path d="M1 2h4v4H1z" fill="#4aa3df"/><path d="M5 1h3v5H5z" fill="#e8b63c"/><path d="M5 10l2 2 4-5" fill="none" stroke="#63c46f" stroke-width="1.500"/>`)}
    ${ic(4, 12, `<path d="M2 2h3v6h5v4H2z" fill="none" stroke="#e0b07a"/>`)}
    ${ic(6, 12, `<path d="M1 7a2.500 2.500 0 0 1 3-2h3a2.500 2.500 0 0 1 0 5H4" fill="none" stroke="#c68a5a" stroke-width="1.300"/><path d="M5 7h4a2 2 0 0 1 2 2" fill="none" stroke="#c68a5a" stroke-width="1.300"/>`)}
    ${ic(8, 12, `<path d="M1 2h10v9H1z" fill="none" stroke="${w}"/><path d="M6 4h4v3H6z" fill="${w}"/>`)}
    ${ic(5, 8, `<path d="M0 3h8M0 7h8M0 11h8" stroke="${w}" stroke-width="1.300"/>`)}`;
  }
}

class LayerPopup extends CadElement {
  render() {
    const items = ['A2_A', 'A2_K', 'A2x3', 'A2x4', 'A2x5', '-'];
    return `<style>
      :host { position: absolute; left: 859px; top: 408px; width: 79px; height: 91px; background: #f0f0f0; box-shadow: 0 0 2px rgba(0,0,0,.45); color: #555; display: block; padding-top: 2px; box-sizing: border-box; letter-spacing: 0; }
      .m { height: 14.800px; display: flex; align-items: center; position: relative; padding-left: 24px; }
      .chk { position: absolute; left: 3px; top: 0; width: 14px; height: 15px; background: #90c8f6; display: flex; align-items: center; justify-content: center; }
    </style>${items.map((t, i) => `<div class="m">${i === 0 ? '<span class="chk"><svg width="8" height="7" viewBox="0 0 8 7"><path d="M.5 3.500 3 6l4.500-5.500" fill="none" stroke="#333" stroke-width="1.100"/></svg></span>' : ''}${t}</div>`).join('')}`;
  }
}

class WinActivation extends CadElement {
  render() {
    return `<style>
      :host { position: absolute; left: 932px; top: 592px; display: block; pointer-events: none; white-space: nowrap; font-family: "Noto Sans", sans-serif; letter-spacing: 0; }
      .a { font-size: 12.800px; line-height: 18px; color: rgba(225, 228, 232, .45); }
      .b { font-size: 9.700px; line-height: 13px; margin-top: 1px; color: rgba(225, 228, 232, .32); }
    </style><div class="a">Активация Windows</div><div class="b">Чтобы активировать Windows, перейдите в раздел "Параметры".</div>`;
  }
}

customElements.define('cad-ribbon', CadRibbon);
customElements.define('doc-tabs', DocTabs);
customElements.define('cad-main', CadMain);
customElements.define('tool-strip', ToolStrip);
customElements.define('dock-panel', DockPanel);
customElements.define('side-tabs', SideTabs);
customElements.define('tool-palette', ToolPalette);
customElements.define('sheet-set', SheetSet);
customElements.define('cad-canvas', CadCanvas);
customElements.define('right-dock', RightDock);
customElements.define('layer-manager', LayerManager);
customElements.define('prop-section', PropSection);
customElements.define('prop-row', PropRow);
customElements.define('props-panel', PropsPanel);
customElements.define('material-strip', MaterialStrip);
customElements.define('layout-tabs', LayoutTabs);
customElements.define('status-bar', StatusBar);
customElements.define('layer-popup', LayerPopup);
customElements.define('win-activation', WinActivation);
</script>
</body>
</html>
